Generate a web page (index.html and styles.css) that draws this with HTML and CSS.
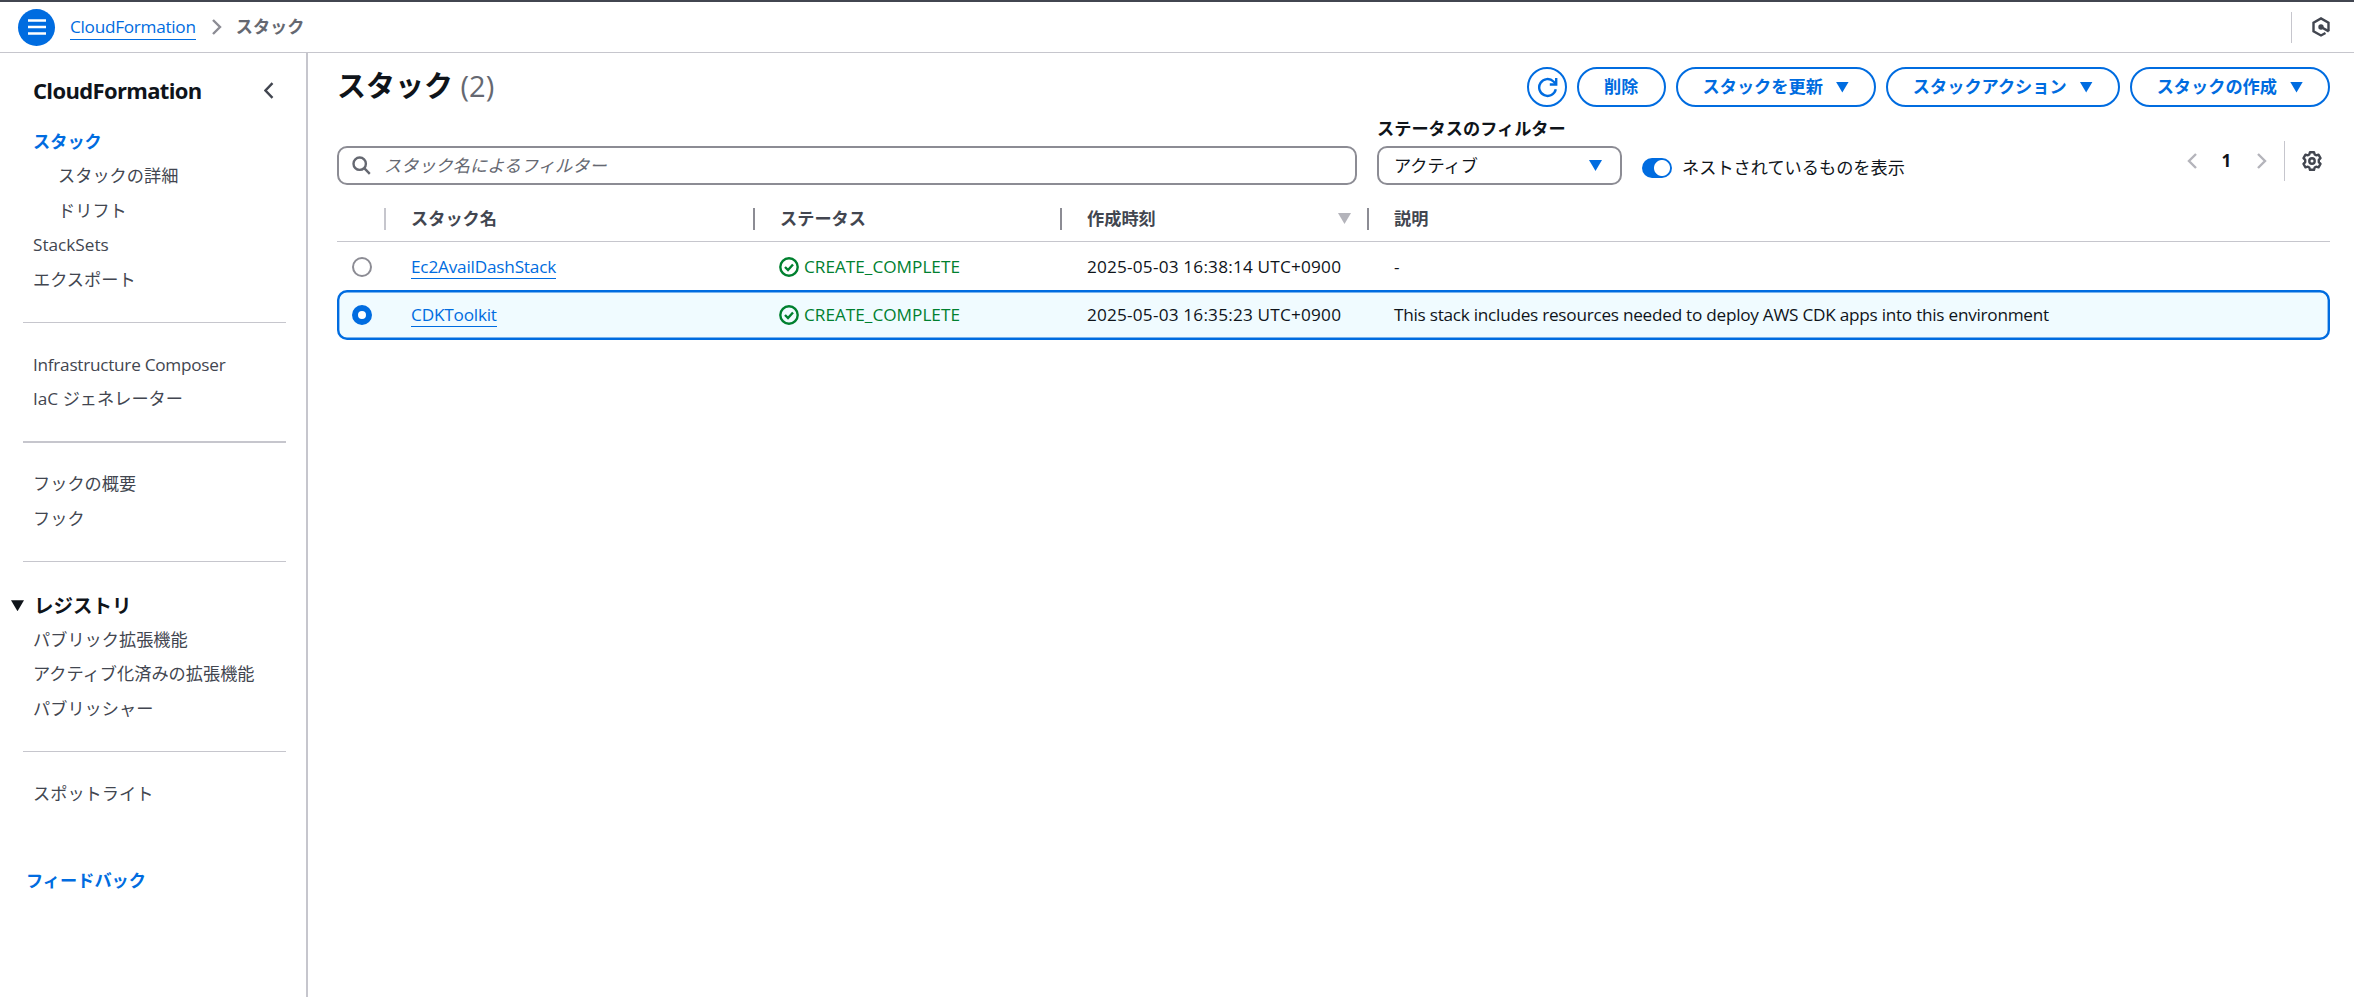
FILE: index.html
```html
<!DOCTYPE html>
<html lang="ja">
<head>
    <meta charset="UTF-8">
    <meta name="viewport" content="width=device-width, initial-scale=1.0">
    <title>CloudFormation - スタック</title>
    <link rel="stylesheet" href="styles.css">
</head>
<body>
<header class="topbar">
    <button class="menu-btn" aria-label="メニュー">
        <svg width="18" height="16" viewBox="0 0 18 16"><path d="M0 1.5h18M0 8h18M0 14.5h18"/></svg>
    </button>
    <nav class="breadcrumb">
        <a class="link" href="#">CloudFormation</a>
        <svg class="crumb-arrow" width="10" height="16" viewBox="0 0 10 16"><path d="M1 1l7 7-7 7"/></svg>
        <span>スタック</span>
    </nav>
    <div class="topbar-tools">
        <svg class="icon" width="18" height="20" viewBox="0 0 18 20"><path d="M16.500 14.300V5.700L9 1.500 1.500 5.700v8.600L9 18.500l4.500-2.500"/><path d="M9.500 10.200l7.300 4.200"/><circle class="dot" cx="9" cy="10" r="2.700"/></svg>
    </div>
</header>

<div class="layout">
    <aside class="sidebar">
        <div class="sidebar-title">
            <h2>CloudFormation</h2>
            <svg class="icon" width="10" height="17" viewBox="0 0 10 17"><path d="M8.500 1.200L1.500 8.500l7 7.300"/></svg>
        </div>
        <ul class="nav">
            <li class="active">スタック</li>
            <li class="sub">スタックの詳細</li>
            <li class="sub">ドリフト</li>
            <li>StackSets</li>
            <li>エクスポート</li>
        </ul>
        <hr>
        <ul class="nav">
            <li class="latin">Infrastructure Composer</li>
            <li>IaC ジェネレーター</li>
        </ul>
        <hr>
        <ul class="nav">
            <li>フックの概要</li>
            <li>フック</li>
        </ul>
        <hr>
        <div class="nav-group"><span class="caret"></span>レジストリ</div>
        <ul class="nav">
            <li>パブリック拡張機能</li>
            <li>アクティブ化済みの拡張機能</li>
            <li>パブリッシャー</li>
        </ul>
        <hr>
        <ul class="nav">
            <li>スポットライト</li>
        </ul>
        <a class="feedback" href="#">フィードバック</a>
    </aside>

    <main class="content">
        <div class="page-head">
            <h1>スタック <span class="count">(2)</span></h1>
            <div class="actions">
                <button class="btn btn-icon" aria-label="更新">
                    <svg width="21" height="21" viewBox="0 0 21 21"><path d="M18.800 12.300A8.400 8.400 0 1 1 16.500 4.500L19 7"/><path d="M19.200 1v6.500h-6.400"/></svg>
                </button>
                <button class="btn">削除</button>
                <button class="btn">スタックを更新<span class="caret"></span></button>
                <button class="btn">スタックアクション<span class="caret"></span></button>
                <button class="btn">スタックの作成<span class="caret"></span></button>
            </div>
        </div>

        <div class="filters">
            <div class="search">
                <svg width="19" height="19" viewBox="0 0 19 19"><circle cx="7.700" cy="7.700" r="6.200"/><path d="M12.200 12.200l5.600 5.600"/></svg>
                <span>スタック名によるフィルター</span>
            </div>
            <div class="status-filter">
                <label>ステータスのフィルター</label>
                <div class="select">アクティブ<span class="caret"></span></div>
            </div>
            <div class="toggle-field"><span class="toggle"></span>ネストされているものを表示</div>
            <div class="pagination">
                <svg class="page-arrow" width="10" height="16" viewBox="0 0 10 16"><path d="M9 1L2 8l7 7"/></svg>
                <span class="page">1</span>
                <svg class="page-arrow" width="10" height="16" viewBox="0 0 10 16"><path d="M1 1l7 7-7 7"/></svg>
                <span class="divider"></span>
                <svg class="icon gear" width="20" height="20" viewBox="0 0 20 20"><path d="M8 1.200h4l.7 2.300 1.400.8 2.400-.6 2 3.400-1.700 1.800v2.200l1.700 1.800-2 3.400-2.400-.6-1.400.8-.7 2.300H8l-.7-2.300-1.400-.8-2.400.6-2-3.400 1.700-1.800V8.900L1.500 7.100l2-3.400 2.400.6 1.400-.8z"/><circle cx="10" cy="10" r="2.700"/></svg>
            </div>
        </div>

        <div class="table">
            <div class="row head">
                <div></div>
                <div>スタック名</div>
                <div>ステータス</div>
                <div>作成時刻<span class="caret"></span></div>
                <div>説明</div>
            </div>
            <div class="row">
                <div><span class="radio"></span></div>
                <div><a class="link" href="#">Ec2AvailDashStack</a></div>
                <div class="status"><svg width="20" height="20" viewBox="0 0 20 20"><circle cx="10" cy="10" r="8.700"/><path d="M6 10l3 3 5-5.500"/></svg>CREATE_COMPLETE</div>
                <div class="date">2025-05-03 16:38:14 UTC+0900</div>
                <div>-</div>
            </div>
            <div class="row selected">
                <div><span class="radio checked"></span></div>
                <div><a class="link" href="#">CDKToolkit</a></div>
                <div class="status"><svg width="20" height="20" viewBox="0 0 20 20"><circle cx="10" cy="10" r="8.700"/><path d="M6 10l3 3 5-5.500"/></svg>CREATE_COMPLETE</div>
                <div class="date">2025-05-03 16:35:23 UTC+0900</div>
                <div class="latin">This stack includes resources needed to deploy AWS CDK apps into this environment</div>
            </div>
        </div>
    </main>
</div>
</body>
</html>
```

FILE: styles.css
```css
* {
    box-sizing: border-box;
}

body {
    margin: 0;
    height: 997px;
    display: flex;
    flex-direction: column;
    overflow: hidden;
    background-color: #fff;
    color: #0f141a;
    font-family: "Open Sans", "Noto Sans CJK JP", sans-serif;
    font-size: 17.2px;
    line-height: 24px;
}

h1, h2, ul {
    margin: 0;
    padding: 0;
}

svg {
    fill: none;
    stroke: currentColor;
    stroke-width: 2.4;
    flex-shrink: 0;
}

button {
    font-family: inherit;
    font-size: inherit;
    line-height: inherit;
}

.link {
    color: #006ce0;
    text-decoration: none;
    border-bottom: 1.5px solid #006ce0;
    letter-spacing: -0.2px;
}

.latin {
    letter-spacing: -0.26px;
}

.icon {
    color: #424650;
}

.icon .dot {
    fill: currentColor;
    stroke: none;
}

.caret {
    width: 13px;
    height: 11px;
    background-color: currentColor;
    clip-path: polygon(0 0, 100% 0, 50% 100%);
    flex-shrink: 0;
}

/* top bar */
.topbar {
    height: 53px;
    display: flex;
    align-items: center;
    border-top: 2px solid #424650;
    border-bottom: 1px solid #c6c6cd;
    padding: 0 24px 0 18px;
    flex-shrink: 0;
}

.menu-btn {
    width: 37px;
    height: 37px;
    padding: 0;
    border: 0;
    border-radius: 50%;
    background-color: #006ce0;
    color: #fff;
    display: flex;
    align-items: center;
    justify-content: center;
}

.breadcrumb {
    display: flex;
    align-items: center;
    margin-left: 15px;
    color: #656871;
    font-weight: 600;
}

.breadcrumb .link {
    font-weight: 400;
    letter-spacing: -0.28px;
}

.crumb-arrow {
    margin: 0 14px 0 16px;
    color: #8c8c94;
}

.topbar-tools {
    margin-left: auto;
    height: 31px;
    padding-left: 20px;
    border-left: 1.5px solid #c6c6cd;
    display: flex;
    align-items: center;
}

.layout {
    display: flex;
    flex: 1;
}

/* side navigation */
.sidebar {
    width: 308px;
    border-right: 2px solid #c6c6cd;
    padding: 20px 20px 0 23px;
    color: #424650;
}

.sidebar-title {
    display: flex;
    align-items: center;
    justify-content: space-between;
    padding: 0 12px 0 10px;
    height: 34px;
    margin-bottom: 18px;
}

.sidebar-title h2 {
    font-size: 22px;
    letter-spacing: -0.65px;
    color: #0f141a;
}

.nav {
    list-style: none;
    padding-left: 10px;
    line-height: 34.4px;
    white-space: nowrap;
}

.nav .active {
    color: #006ce0;
    font-weight: 700;
}

.nav .sub {
    padding-left: 25px;
}

.sidebar hr {
    border: 0;
    height: 1.5px;
    background-color: #c6c6cd;
    margin: 24.6px 0;
}

.nav-group {
    display: flex;
    align-items: center;
    gap: 10px;
    margin-left: -12px;
    padding-top: 2px;
    height: 36px;
    font-size: 19.5px;
    font-weight: 700;
    color: #0f141a;
}

.feedback {
    display: block;
    margin: 58px 0 0 3px;
    color: #006ce0;
    font-weight: 700;
    text-decoration: none;
}

/* main area */
.content {
    flex: 1;
    padding: 14px 24px 0 29px;
}

.page-head {
    display: flex;
    justify-content: space-between;
    height: 39px;
}

h1 {
    font-size: 29px;
    line-height: 37px;
}

.count {
    color: #656871;
    font-weight: 400;
}

.actions {
    display: flex;
    gap: 10px;
}

.btn {
    height: 40px;
    display: flex;
    align-items: center;
    gap: 13px;
    padding: 0 25px;
    border: 2.4px solid #006ce0;
    border-radius: 20px;
    background-color: #fff;
    color: #006ce0;
    font-weight: 700;
}

.btn-icon {
    width: 40px;
    padding: 0;
    justify-content: center;
}

.filters {
    display: flex;
    align-items: flex-end;
    margin-top: 10px;
    height: 69px;
}

.search,
.select {
    height: 39px;
    display: flex;
    align-items: center;
    border: 2px solid #8c8c94;
    border-radius: 10px;
}

.search {
    width: 1020px;
    padding-left: 13px;
    gap: 13px;
    color: #656871;
}

.search span {
    font-style: italic;
}

.status-filter {
    margin-left: 20px;
}

.status-filter label {
    display: block;
    font-weight: 700;
    margin-bottom: 5px;
}

.select {
    width: 245px;
    padding: 0 18px 0 15px;
    justify-content: space-between;
}

.select .caret {
    color: #006ce0;
}

.toggle-field {
    display: flex;
    align-items: center;
    gap: 10px;
    height: 39px;
    margin-left: 20px;
    padding-top: 4px;
}

.toggle {
    width: 30px;
    height: 20px;
    border-radius: 10px;
    background: radial-gradient(circle at 20px 10px, #fff 7.5px, #006ce0 8.5px);
}

.pagination {
    display: flex;
    align-items: center;
    margin-left: auto;
    margin-bottom: 4px;
    padding-right: 8px;
    height: 40px;
}

.page {
    width: 60px;
    text-align: center;
    font-weight: 700;
}

.page-arrow {
    color: #b4b4bb;
}

.divider {
    width: 1.5px;
    height: 40px;
    margin: 0 17px;
    background-color: #c6c6cd;
}

.gear {
    stroke-linejoin: round;
}

/* stack table */
.row {
    display: grid;
    grid-template-columns: 49px 369px 307px 307px 1fr;
    align-items: center;
    height: 49px;
}

.row > div {
    padding-left: 25px;
}

.row > div:first-child {
    padding-left: 15px;
}

.head {
    height: 57px;
    border-bottom: 1.5px solid #c6c6cd;
    padding-top: 11px;
    color: #424650;
    font-weight: 700;
}

.head > div {
    display: flex;
    align-items: center;
    justify-content: space-between;
    height: 22px;
    padding-right: 16px;
    border-right: 2px solid #8c8c94;
}

.head > div:first-child {
    border-color: #c6c6cd;
}

.head > div:last-child {
    border: 0;
}

.head .caret {
    color: #b4b4bb;
}

.selected {
    height: 50px;
    margin-top: -1px;
    background-color: #f0fbff;
    border-radius: 10px;
    box-shadow: inset 0 0 0 2.4px #006ce0;
}

.radio {
    display: block;
    width: 20px;
    height: 20px;
    border: 2px solid #8c8c94;
    border-radius: 50%;
}

.radio.checked {
    border: 6px solid #006ce0;
    background-color: #fff;
}

.row > .status {
    display: flex;
    align-items: center;
    gap: 5px;
    padding-left: 24px;
    color: #00802f;
}

.date {
    letter-spacing: 0.2px;
}
```
